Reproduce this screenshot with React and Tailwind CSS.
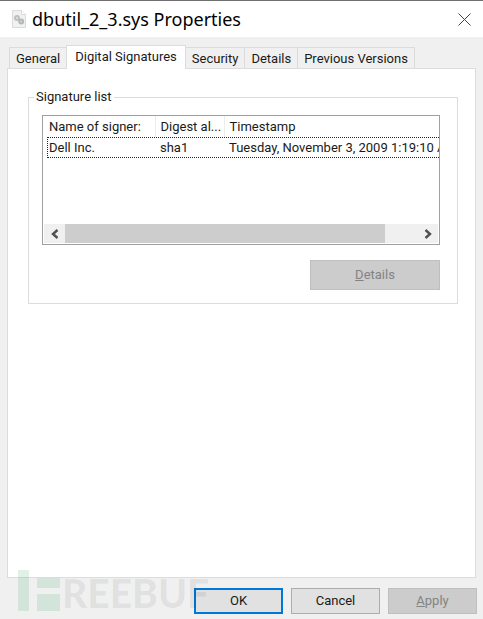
import { useState } from "react";

const TABS = ["General", "Digital Signatures", "Security", "Details", "Previous Versions"];

const SIGNATURES = [
  { signer: "Dell Inc.", digest: "sha1", timestamp: "Tuesday, November 3, 2009 1:19:10 AM" },
];

function FileIcon() {
  return (
    <svg width="14" height="18" viewBox="0 0 14 18" aria-hidden="true">
      <path d="M.5.5h9l4 4v13H.5z" fill="#f1f1f1" stroke="#dadada" />
      <path d="M9.5.5v4h4" fill="#fff" stroke="#dadada" />
      <circle cx="5" cy="8" r="2" fill="#e4e4e4" stroke="#bcc0c2" strokeWidth="2" />
      <circle cx="9.200" cy="11.500" r="2" fill="#d4d4d4" stroke="#b4b8ba" strokeWidth="2" />
    </svg>
  );
}

function TitleBar() {
  return (
    <header className="flex h-[37px] items-center border-t border-[#707070] bg-white pr-3 pl-3">
      <FileIcon />
      <h1 className="ml-[6px] flex-1 font-['Noto_Sans','Open_Sans',sans-serif] text-[18px] leading-6 text-black">
        dbutil_2_3.sys Properties
      </h1>
      <button type="button" aria-label="Close" className="text-[#444]">
        <svg width="13" height="13" viewBox="0 0 13 13" fill="none" stroke="currentColor">
          <path d="M.5.5l12 12M12.5.5l-12 12" />
        </svg>
      </button>
    </header>
  );
}

function Tabs({ active, onSelect }) {
  return (
    <div role="tablist" className="relative -mb-px flex items-end pl-[2px]">
      {TABS.map(tab => (
        <button
          key={tab}
          type="button"
          role="tab"
          aria-selected={tab === active}
          onClick={() => onSelect(tab)}
          className={
            tab === active
              ? "h-6 border border-b-0 border-[#dcdcdc] bg-white px-2 pb-px whitespace-nowrap"
              : "h-[22px] border border-l-0 border-[#dcdcdc] px-[6px] pt-px whitespace-nowrap first:border-r-0 first:border-l"
          }
        >
          {tab}
        </button>
      ))}
    </div>
  );
}

function SignatureTable() {
  return (
    <div className="border border-[#a0a0a0] bg-white">
      <div className="h-[108px] overflow-hidden pl-1">
        <table className="w-[460px] table-fixed border-collapse text-left">
          <colgroup>
            <col className="w-[108px]" />
            <col className="w-[69px]" />
            <col />
          </colgroup>
          <thead>
            <tr className="h-[21px]">
              <th scope="col" className="border-r border-[#ececec] p-0 pl-[2px] font-normal whitespace-nowrap">Name of signer:</th>
              <th scope="col" className="border-r border-[#ececec] p-0 pl-[5px] font-normal whitespace-nowrap">Digest al...</th>
              <th scope="col" className="p-0 pl-[5px] font-normal">Timestamp</th>
            </tr>
          </thead>
          <tbody>
            {SIGNATURES.map(row => (
              <tr key={row.signer} className="h-[21px] outline-1 -outline-offset-1 outline-[#222] outline-dotted">
                <td className="p-0 pl-[2px]">{row.signer}</td>
                <td className="p-0 pl-[5px]">{row.digest}</td>
                <td className="p-0 pl-[5px] whitespace-nowrap">{row.timestamp}</td>
              </tr>
            ))}
          </tbody>
        </table>
      </div>
      <div className="mx-px mb-px flex h-[19px] bg-[#f0f0f0] text-[#505050]">
        <button type="button" aria-label="Scroll left" className="flex w-[21px] items-center justify-center">
          <svg width="8" height="10" viewBox="0 0 8 10" fill="none" stroke="currentColor" strokeWidth="2.4">
            <path d="M6.5 1L2 5l4.5 4" />
          </svg>
        </button>
        <div className="flex-1">
          <div className="h-full w-[91%] bg-[#cdcdcd]" />
        </div>
        <button type="button" aria-label="Scroll right" className="flex w-[21px] items-center justify-center">
          <svg width="8" height="10" viewBox="0 0 8 10" fill="none" stroke="currentColor" strokeWidth="2.4">
            <path d="M1.5 1L6 5l-4.5 4" />
          </svg>
        </button>
      </div>
    </div>
  );
}

function Watermark() {
  return (
    <div className="pointer-events-none absolute bottom-2 left-[18px] flex items-end" aria-hidden="true">
      <svg width="43" height="41" viewBox="0 0 43 41" fill="#2f9e68" fillOpacity=".15">
        <path d="M0 0h11v41H0zM19 8h23v10H19zM19 24h23v17H19z" />
      </svg>
      <span className="ml-px font-['Lato',sans-serif] text-[39px] leading-9 font-black text-black/7">REEBUF</span>
    </div>
  );
}

export default function App() {
  const [tab, setTab] = useState("Digital Signatures");

  return (
    <div className="relative flex min-h-screen flex-col bg-[#f0f0f0] font-['Roboto','Liberation_Sans',sans-serif] text-[13px] leading-4 text-[#1a1a1a]">
      <TitleBar />
      <main className="flex flex-1 flex-col pt-2 pr-[7px] pl-[7px]">
        <Tabs active={tab} onSelect={setTab} />
        <section role="tabpanel" aria-label={tab} className="flex-1 border border-[#dcdcdc] bg-white pt-5 pr-[17px] pl-5">
          <fieldset className="min-w-0 border border-[#dcdcdc] pr-[17px] pb-[13px] pl-[13px]">
            <legend className="-ml-2 px-[2px]">Signature list</legend>
            <div className="pt-[10px]">
              <SignatureTable />
            </div>
            <div className="mt-[15px] flex justify-end">
              <button type="button" disabled className="h-[30px] w-[130px] border border-[#bfbfbf] bg-[#cccccc] text-[#838383]">
                <u>D</u>etails
              </button>
            </div>
          </fieldset>
        </section>
      </main>
      <footer className="flex justify-end gap-2 pt-[10px] pr-[6px] pb-[5px]">
        <button type="button" className="h-[26px] w-[89px] border-2 border-[#0078d7] bg-[#e1e1e1]">OK</button>
        <button type="button" className="h-[26px] w-[89px] border border-[#adadad] bg-[#e1e1e1]">Cancel</button>
        <button type="button" disabled className="h-[26px] w-[89px] border border-[#bfbfbf] bg-[#cccccc] text-[#838383]">
          <u>A</u>pply
        </button>
      </footer>
      <Watermark />
    </div>
  );
}
